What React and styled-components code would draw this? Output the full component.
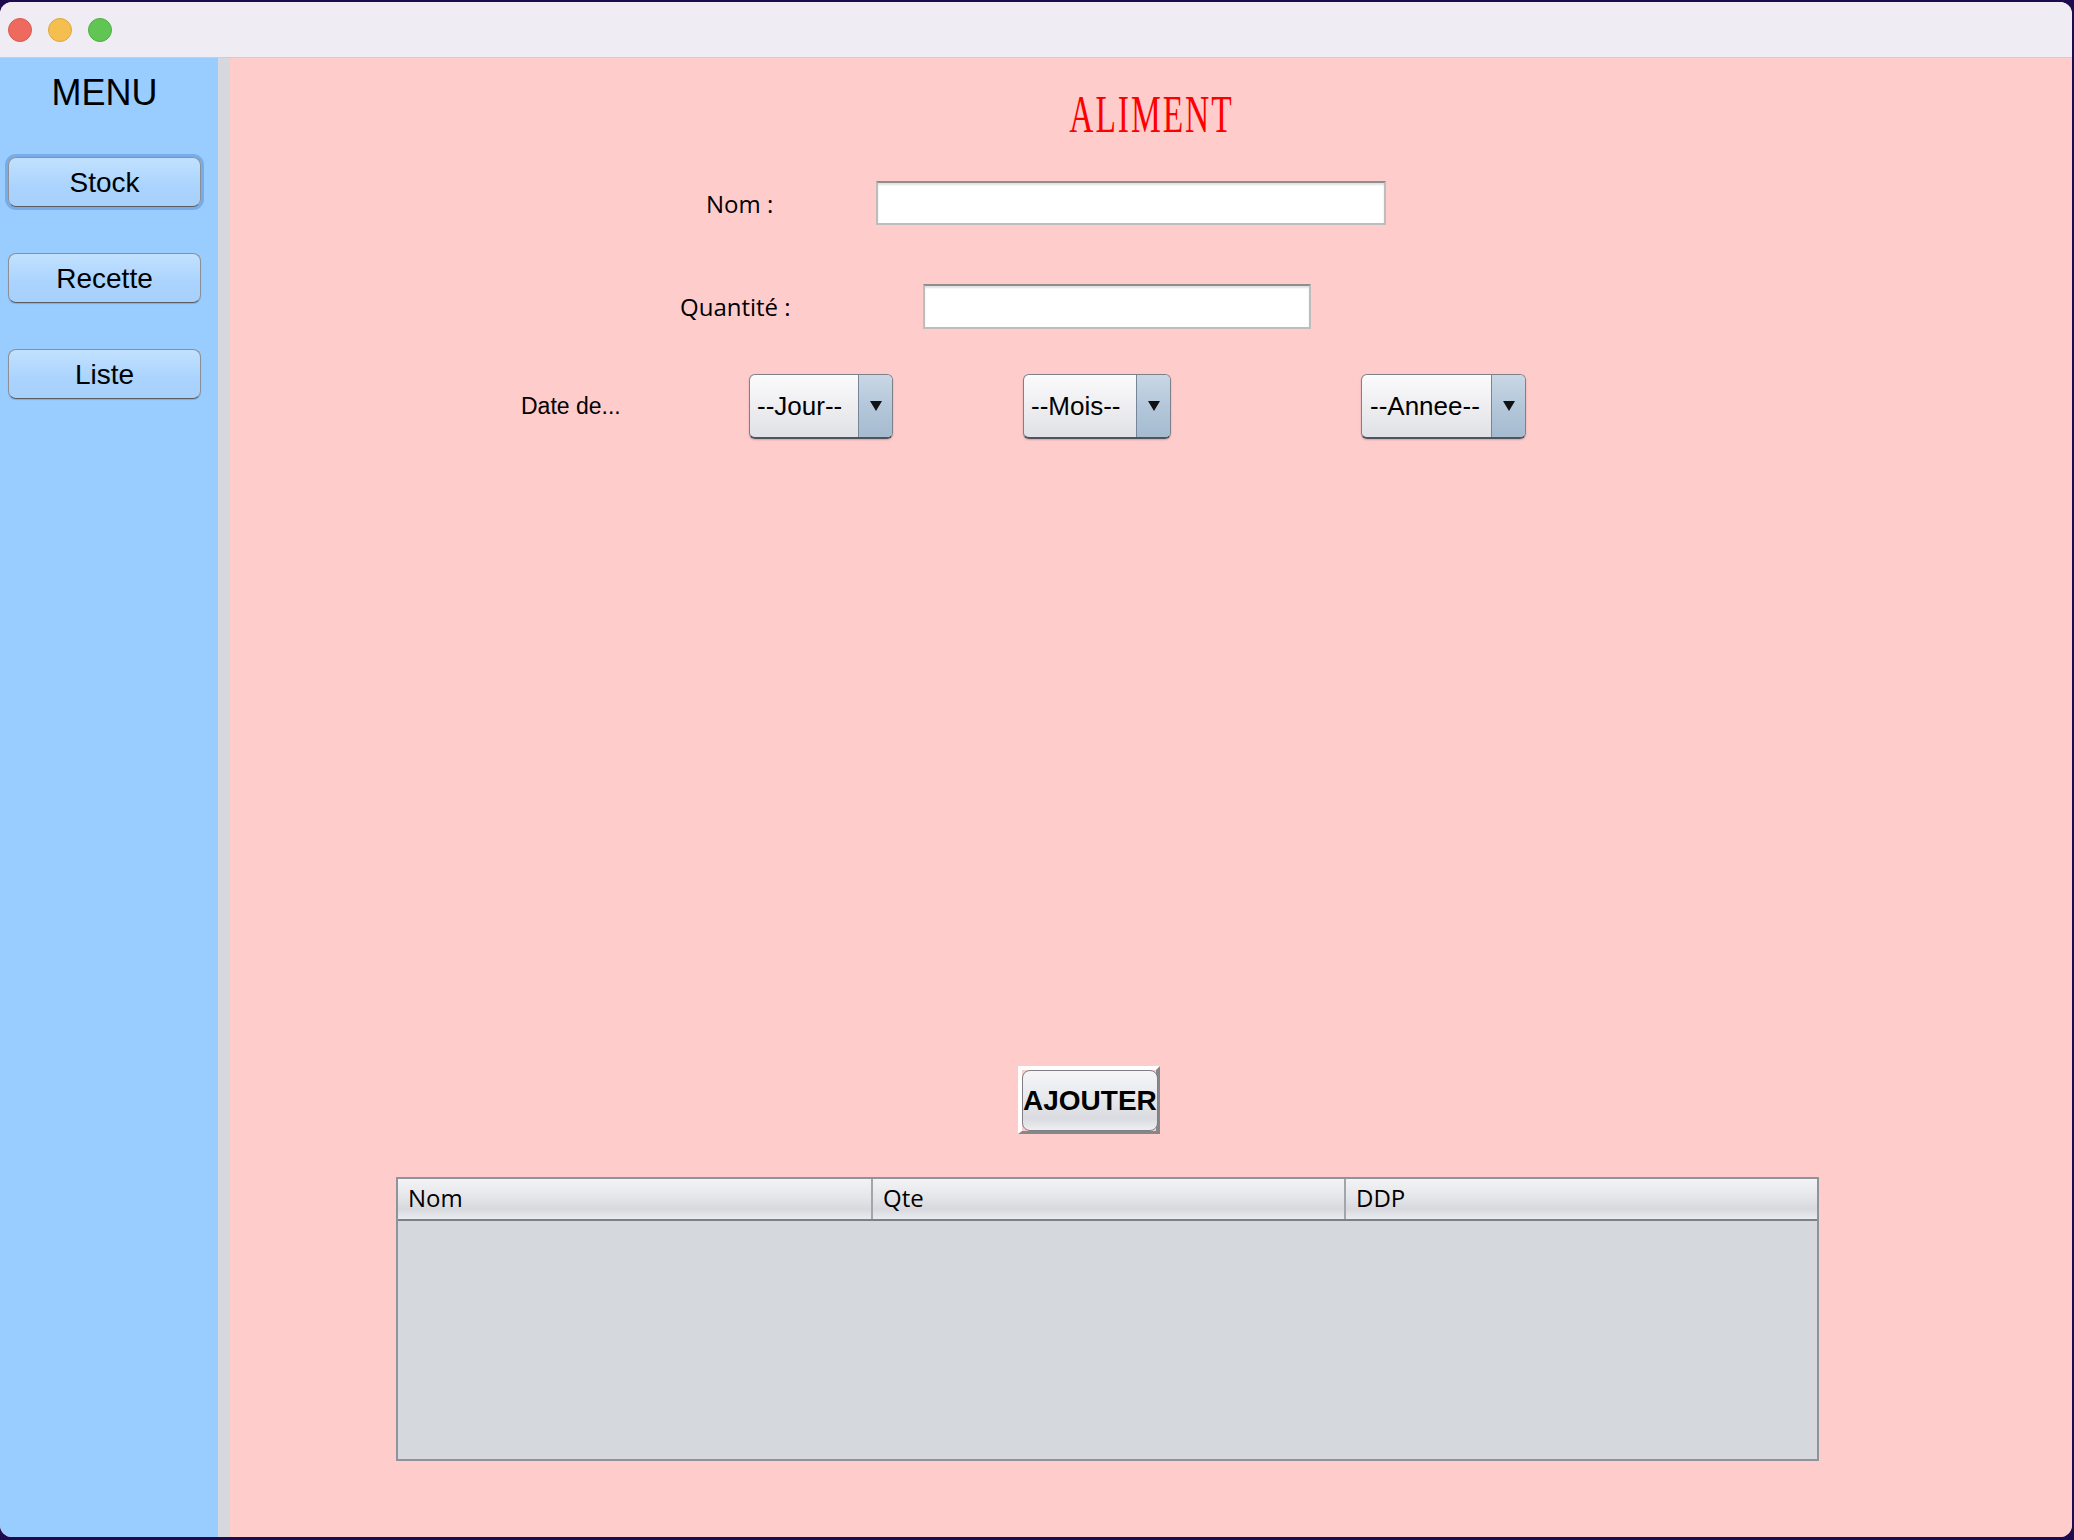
import React from "react";
import styled, { createGlobalStyle } from "styled-components";

const GlobalStyle = createGlobalStyle`
  html, body {
    margin: 0;
    padding: 0;
    background: #1c0b4f;
  }
  body {
    width: 2074px;
    height: 1540px;
    overflow: hidden;
    font-family: "Liberation Sans", Arial, sans-serif;
  }
`;

const Window = styled.div`
  margin-top: 2px;
  width: 2072px;
  height: 1535px;
  border-radius: 12px;
  overflow: hidden;
  display: flex;
  flex-direction: column;
  background: #ffcccc;
`;

const TitleBar = styled.div`
  flex: none;
  height: 55px;
  background: #efedf3;
  border-bottom: 1px solid #dcc8cc;
  display: flex;
  align-items: center;
  gap: 16px;
  padding-left: 8px;
`;

const Light = styled.span`
  width: 24px;
  height: 24px;
  border-radius: 50%;
  box-sizing: border-box;
  background: ${(p) => p.$color};
  border: 1px solid ${(p) => p.$edge};
`;

const Body = styled.div`
  flex: 1;
  display: flex;
  min-height: 0;
`;

const Sidebar = styled.nav`
  flex: none;
  width: 218px;
  box-sizing: border-box;
  padding: 17px 17px 0 8px;
  background: #99ccff;
  display: flex;
  flex-direction: column;
`;

const MenuTitle = styled.div`
  font-size: 36px;
  line-height: 36px;
  text-align: center;
  color: #000;
  margin-bottom: 46px;
`;

const SideButton = styled.button`
  height: 50px;
  margin-bottom: 46px;
  box-sizing: border-box;
  border: 1.5px solid #8c9096;
  border-bottom-color: #5a5d62;
  border-radius: 8px;
  background: linear-gradient(#c2e1ff, #aad4fd 60%, #a7d1fb);
  font-family: "Liberation Sans", Arial, sans-serif;
  font-size: 28px;
  color: #000;
  padding: 2px 0 0;
  box-shadow: ${(p) =>
    p.$focused ? "0 0 0 3px rgba(92, 146, 214, 0.55)" : "0 1px 1px rgba(0,0,0,0.15)"};
`;

const Divider = styled.div`
  flex: none;
  width: 12px;
  background: #d5d8dd;
`;

const Main = styled.main`
  flex: 1;
  display: flex;
  flex-direction: column;
  background: #ffcccc;
`;

const Title = styled.h1`
  margin: 31px 0 0;
  height: 52px;
  text-align: center;
  font-family: "Liberation Serif", "Times New Roman", serif;
  font-weight: normal;
  font-size: 52px;
  line-height: 52px;
  color: #ff0000;

  span {
    display: inline-block;
    transform: scaleX(0.645);
    letter-spacing: 3px;
  }
`;

const FormRow = styled.div`
  display: flex;
  align-items: center;
  height: ${(p) => p.$h}px;
  margin-top: ${(p) => p.$top}px;
  padding-left: ${(p) => p.$left}px;
`;

const Label = styled.span`
  flex: none;
  width: ${(p) => p.$w}px;
  font-family: ${(p) => (p.$plain ? '"Liberation Sans", Arial' : '"Open Sans", "DejaVu Sans"')}, sans-serif;
  font-size: ${(p) => p.$size || 24}px;
  color: #000;
`;

const TextInput = styled.input`
  flex: none;
  width: ${(p) => p.$w}px;
  height: 100%;
  box-sizing: border-box;
  background: #fff;
  border: 2px solid #bdbdbd;
  border-top-color: #8e8e8e;
  box-shadow: inset 0 2px 2px rgba(0, 0, 0, 0.12);
  outline: none;
  padding: 0 8px;
  font-size: 24px;
`;

const Combo = styled.div`
  flex: none;
  width: ${(p) => p.$w}px;
  height: 65px;
  margin-left: ${(p) => p.$gap || 0}px;
  box-sizing: border-box;
  display: flex;
  border: 1.5px solid #7c818a;
  border-bottom: 2.5px solid #4f545c;
  border-radius: 6px;
  overflow: hidden;
  background: linear-gradient(#fbfbfc, #eeeef1 50%, #e0e1e6);
  box-shadow: 0 1px 2px rgba(0, 0, 0, 0.2);
`;

const ComboText = styled.span`
  flex: 1;
  display: flex;
  align-items: center;
  padding-left: ${(p) => p.$pad}px;
  font-size: 26px;
  color: #000;
  white-space: nowrap;
`;

const ComboArrow = styled.span`
  flex: none;
  width: 33px;
  display: flex;
  align-items: center;
  justify-content: center;
  border-left: 1.5px solid #76859a;
  background: linear-gradient(#c9d7e5, #b4c7da 50%, #a5bbd0);

  &::after {
    content: "";
    border-left: 6px solid transparent;
    border-right: 6px solid transparent;
    border-top: 10px solid #111;
  }
`;

const AddFrame = styled.div`
  align-self: flex-start;
  margin-top: 627px;
  margin-left: 788px;
  width: 142px;
  height: 68px;
  box-sizing: border-box;
  border-top: 4px solid #ffffff;
  border-left: 4px solid #ffffff;
  border-right: 4px solid #86878b;
  border-bottom: 3px solid #86878b;
  display: flex;
`;

const AddButton = styled.button`
  flex: 1;
  padding: 0;
  box-sizing: border-box;
  border: 1.5px solid #7d7f84;
  border-radius: 8px;
  background: linear-gradient(#f6f6f8, #e6e7eb 50%, #dadbe0 80%, #eeeff2);
  font-family: "Liberation Sans", Arial, sans-serif;
  font-weight: bold;
  font-size: 28px;
  color: #000;
  display: flex;
  align-items: center;
  justify-content: center;
  white-space: nowrap;
  overflow: visible;
`;

const Table = styled.div`
  align-self: flex-start;
  margin-top: 43px;
  margin-left: 166px;
  width: 1423px;
  height: 284px;
  box-sizing: border-box;
  border: 2px solid #8f949c;
  background: #d5d8dd;
  display: flex;
  flex-direction: column;
`;

const HeaderRow = styled.div`
  display: grid;
  grid-template-columns: repeat(3, 1fr);
  height: 40px;
  border-bottom: 2px solid #7c8088;
  background: linear-gradient(#f3f3f5, #e5e6ea 45%, #d8d9de 75%, #ebecef);
`;

const HeaderCell = styled.div`
  display: flex;
  align-items: center;
  padding: 0 0 4px 10px;
  border-left: ${(p) => (p.$first ? "none" : "2px solid #a1a5ac")};
  font-family: "Open Sans", "DejaVu Sans", sans-serif;
  font-size: 24px;
  color: #000;
`;

const combos = [
  { label: "--Jour--", w: 144, gap: 0, pad: 7 },
  { label: "--Mois--", w: 148, gap: 130, pad: 7 },
  { label: "--Annee--", w: 165, gap: 190, pad: 8 },
];

export default function App() {
  return (
    <>
      <GlobalStyle />
      <Window>
        <TitleBar>
          <Light $color="#ee6a5f" $edge="#d65a50" />
          <Light $color="#f5bf4f" $edge="#dca640" />
          <Light $color="#61c554" $edge="#50ad45" />
        </TitleBar>
        <Body>
          <Sidebar>
            <MenuTitle>MENU</MenuTitle>
            <SideButton $focused>Stock</SideButton>
            <SideButton>Recette</SideButton>
            <SideButton>Liste</SideButton>
          </Sidebar>
          <Divider />
          <Main>
            <Title>
              <span>ALIMENT</span>
            </Title>
            <FormRow $h={44} $top={40} $left={476}>
              <Label $w={170}>Nom :</Label>
              <TextInput $w={510} />
            </FormRow>
            <FormRow $h={45} $top={59} $left={450}>
              <Label $w={243}>Quantité :</Label>
              <TextInput $w={388} />
            </FormRow>
            <FormRow $h={65} $top={45} $left={291}>
              <Label $w={228} $plain $size={23}>
                Date de...
              </Label>
              {combos.map((c) => (
                <Combo key={c.label} $w={c.w} $gap={c.gap}>
                  <ComboText $pad={c.pad}>{c.label}</ComboText>
                  <ComboArrow />
                </Combo>
              ))}
            </FormRow>
            <AddFrame>
              <AddButton>AJOUTER</AddButton>
            </AddFrame>
            <Table>
              <HeaderRow>
                <HeaderCell $first>Nom</HeaderCell>
                <HeaderCell>Qte</HeaderCell>
                <HeaderCell>DDP</HeaderCell>
              </HeaderRow>
            </Table>
          </Main>
        </Body>
      </Window>
    </>
  );
}
